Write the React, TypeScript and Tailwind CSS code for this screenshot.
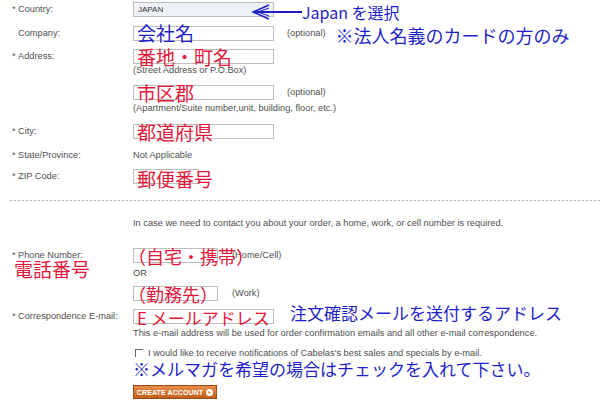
import React from 'react';

// annotation text laid over the form
const jp = "font-['Noto_Sans_CJK_JP','Noto_Sans_CJK_SC',sans-serif] font-normal leading-none whitespace-nowrap";
const red = 'text-[#e3173a]';
const blue = 'text-[#1f1fc8]';

const Row = ({
    label,
    req,
    className = '',
    children,
}: {
    label?: string;
    req?: boolean;
    className?: string;
    children?: React.ReactNode;
}) => (
    <div className={`relative flex h-[15px] items-center leading-[15px] ${className}`}>
        <div className="flex w-[133px] shrink-0 pl-[12px]">
            <span className="w-[6px]">{req ? '*' : ''}</span>
            <span>{label}</span>
        </div>
        {children}
    </div>
);

const Box = ({ className = '', children }: { className?: string; children?: React.ReactNode }) => (
    <div className={`relative h-[15px] shrink-0 border border-[#bdbdbd] ${className}`}>{children}</div>
);

const Note = ({ className = '', children }: { className?: string; children: React.ReactNode }) => (
    <span className={`pointer-events-none absolute ${jp} ${className}`}>{children}</span>
);

const Sub = ({ className = '', children }: { className?: string; children: React.ReactNode }) => (
    <div className={`h-[10px] pl-[133px] leading-[10px] ${className}`}>{children}</div>
);

export default function App() {
    return (
        <div className="relative flex h-[418px] w-[600px] flex-col overflow-hidden bg-white pt-[2px] font-['Liberation_Sans',Arial,sans-serif] text-[9.25px] text-[#4f4f4f]">
            {/* Country */}
            <Row label="Country:" req>
                <Box className="w-[141px] bg-[#eef1f6]">
                    <span className="absolute left-[4px] top-0 text-[8px] leading-[13px] text-[#333]">JAPAN</span>
                </Box>
                <svg className="absolute left-[250px] top-[1px]" width="52" height="18" viewBox="0 0 52 18">
                    <path d="M3 9H52" stroke="#1f1fc8" strokeWidth="2" />
                    <path d="M19 2L3 9L19 16" fill="none" stroke="#1f1fc8" strokeWidth="1.5" />
                    <path d="M19 5L8 9L19 13" fill="none" stroke="#1f1fc8" strokeWidth="1" />
                </svg>
                <span className={`${jp} ${blue} absolute left-[302px] top-[2px] text-[16px]`}>Japan を選択</span>
            </Row>

            {/* Company */}
            <Row label="Company:" className="mt-[9px]">
                <Box className="w-[141px]">
                    <Note className={`${blue} left-[3px] top-[-4px] text-[19px]`}>会社名</Note>
                </Box>
                <span className="ml-[13px]">(optional)</span>
                <span className={`${jp} ${blue} ml-[10px] mt-[3px] text-[18px]`}>※法人名義のカードの方のみ</span>
            </Row>

            {/* Address */}
            <Row label="Address:" req className="mt-[8px]">
                <Box className="w-[141px]">
                    <Note className={`${red} left-[3px] top-[-3px] text-[19px]`}>番地・町名</Note>
                </Box>
            </Row>
            <Sub className="mt-[1px]">(Street Address or P.O.Box)</Sub>

            <Row className="mt-[10px]">
                <Box className="w-[141px]">
                    <Note className={`${red} left-[3px] top-[-3px] text-[19px]`}>市区郡</Note>
                </Box>
                <span className="ml-[13px]">(optional)</span>
            </Row>
            <Sub className="mt-[3px]">(Apartment/Suite number,unit, building, floor, etc.)</Sub>

            {/* City */}
            <Row label="City:" req className="mt-[11px]">
                <Box className="w-[141px]">
                    <Note className={`${red} left-[3px] top-[-3px] text-[19px]`}>都道府県</Note>
                </Box>
            </Row>

            <Row label="State/Province:" req className="mt-[9px]">
                <span>Not Applicable</span>
            </Row>

            <Row label="ZIP Code:" req className="mt-[6px]">
                <Box className="w-[66px]">
                    <Note className={`${red} left-[3px] top-[-1px] text-[19px]`}>郵便番号</Note>
                </Box>
            </Row>

            <div className="ml-[10px] mt-[16px] h-px bg-[repeating-linear-gradient(to_right,#b4b4b4_0_2px,transparent_2px_4px)]" />

            <Sub className="mt-[17px]">
                In case we need to contact you about your order, a home, work, or cell number is required.
            </Sub>

            {/* Phone */}
            <Row label="Phone Number:" req className="mt-[20px]">
                <Note className={`${red} left-[14px] top-[11px] text-[19px]`}>電話番号</Note>
                <Box className="w-[85px]">
                    <Note className={`${red} left-[-6px] top-[-2px] text-[18px]`}>（自宅・携帯）</Note>
                </Box>
                <span className="ml-[14px]">(Home/Cell)</span>
            </Row>
            <Sub className="mt-[5px] text-[#444]">OR</Sub>
            <Row className="mt-[8px]">
                <Box className="w-[85px]">
                    <Note className={`${red} left-[-6px] top-[-2px] text-[18px]`}>（勤務先）</Note>
                </Box>
                <span className="ml-[14px]">(Work)</span>
            </Row>

            {/* E-mail */}
            <Row label="Correspondence E-mail:" req className="mt-[8px]">
                <Box className="w-[141px]">
                    <Note className={`${red} left-[3px] top-[-1px] text-[17px]`}>E メールアドレス</Note>
                </Box>
                <span className={`${jp} ${blue} ml-[16px] mt-[-8px] text-[17px]`}>注文確認メールを送付するアドレス</span>
            </Row>
            <Sub className="mt-[4px]">
                This e-mail address will be used for order confirmation emails and all other e-mail correspondence.
            </Sub>

            <div className="mt-[10px] flex h-[10px] items-center pl-[135px] leading-[10px]">
                <span className="h-[8px] w-[8px] border-l border-t border-l-[#666] border-t-[#666]" />
                <span className="ml-[5px]">I would like to receive notifications of Cabelas's best sales and specials by e-mail.</span>
            </div>

            <div className={`${jp} ${blue} h-[22px] pl-[133px] pt-[2px] text-[17px]`}>
                ※メルマガを希望の場合はチェックを入れて下さい。
            </div>

            <div className="mt-[5px] pl-[133px]">
                <button className="flex h-[14px] w-[84px] items-center justify-center gap-[3px] whitespace-nowrap border border-[#9a4a12] bg-gradient-to-b from-[#e58f4a] to-[#c2601b] text-[7px] font-bold leading-none tracking-[0.1px] text-white">
                    CREATE ACCOUNT
                    <svg width="7" height="7" viewBox="0 0 7 7">
                        <circle cx="3.5" cy="3.5" r="3.5" fill="#fff" />
                        <path d="M2.6 1.9L4.6 3.5L2.6 5.1Z" fill="#c2601b" />
                    </svg>
                </button>
            </div>
        </div>
    );
}
